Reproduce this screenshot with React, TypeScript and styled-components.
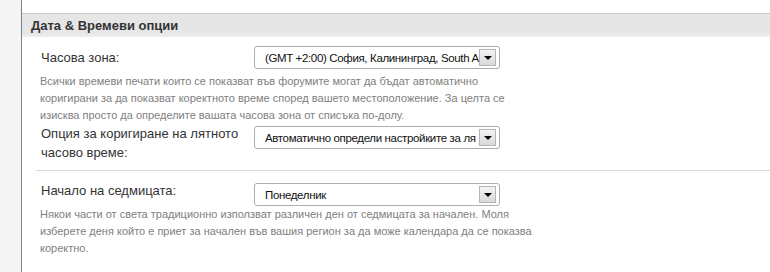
import * as React from "react";
import styled, { createGlobalStyle } from "styled-components";

const GlobalStyle = createGlobalStyle`
  html, body {
    margin: 0;
    padding: 0;
    background: #ffffff;
  }
  body {
    font-family: "Liberation Sans", Arial, sans-serif;
    color: #333333;
  }
`;

type Option = {
  label: string[];
  value: string;
  description?: string[];
  separator?: boolean;
  labelOffset: number;
  selectOffset: number;
  descOffset: number;
  topPad: number;
  bottomPad: number;
};

// стойностите са такива, каквито се виждат в полето (останалото е скрито зад стрелката)
const options: Option[] = [
  {
    label: ["Часова зона:"],
    value: "(GMT +2:00) София, Калининград, South A",
    description: [
      "Всички времеви печати които се показват във форумите могат да бъдат автоматично",
      "коригирани за да показват коректното време според вашето местоположение. За целта се",
      "изисква просто да определите вашата часова зона от списъка по-долу.",
    ],
    labelOffset: 2,
    selectOffset: 0,
    descOffset: 4,
    topPad: 9,
    bottomPad: 0,
  },
  {
    label: ["Опция за коригиране на лятното", "часово време:"],
    value: "Автоматично определи настройките за ля",
    separator: true,
    labelOffset: 0,
    selectOffset: 2,
    descOffset: 0,
    topPad: 0,
    bottomPad: 8,
  },
  {
    label: ["Начало на седмицата:"],
    value: "Понеделник",
    description: [
      "Някои части от света традиционно използват различен ден от седмицата за начален. Моля",
      "изберете деня който е приет за начален във вашия регион за да може календара да се показва",
      "коректно.",
    ],
    labelOffset: -2,
    selectOffset: 0,
    descOffset: 0,
    topPad: 12,
    bottomPad: 0,
  },
];

const App = () => {
  return (
    <>
      <GlobalStyle />
      <Page>
        <Sidebar />
        <Main>
          <Panel>
            <PanelHeader>Дата &amp; Времеви опции</PanelHeader>
            {options.map((o, i) => (
              <React.Fragment key={i}>
                <OptionRow $top={o.topPad} $bottom={o.bottomPad}>
                  <Label $offset={o.labelOffset}>
                    {o.label.map((l) => (
                      <div key={l}>{l}</div>
                    ))}
                  </Label>
                  <SelectBox $offset={o.selectOffset}>
                    <SelectText>{o.value}</SelectText>
                    <ArrowButton>
                      <Triangle />
                    </ArrowButton>
                  </SelectBox>
                </OptionRow>
                {o.description ? (
                  <Description $offset={o.descOffset}>
                    {o.description.map((d) => (
                      <div key={d}>{d}</div>
                    ))}
                  </Description>
                ) : null}
                {o.separator ? <Separator /> : null}
              </React.Fragment>
            ))}
          </Panel>
        </Main>
      </Page>
    </>
  );
};

export default App;

const Page = styled.div`
  display: flex;
  width: 770px;
  height: 272px;
  overflow: hidden;
`;

const Sidebar = styled.div`
  width: 21px;
  flex-shrink: 0;
  background: #f4f4f4;
  border-right: 1px solid #76838f;
`;

const Main = styled.div`
  flex: 1;
  background: #ffffff;
  padding-top: 13px;
`;

const Panel = styled.div`
  border-top: 1px solid #c8c8c8;
`;

const PanelHeader = styled.div`
  height: 23px;
  line-height: 23px;
  padding-left: 9px;
  background: linear-gradient(#e6e6e6 0%, #e6e6e6 80%, #ededed 100%);
  font-size: 13px;
  font-weight: bold;
  color: #333333;
`;

const OptionRow = styled.div<{ $top: number; $bottom: number }>`
  display: grid;
  grid-template-columns: 213px 246px;
  align-items: start;
  padding: ${(p) => p.$top}px 0 ${(p) => p.$bottom}px 19px;
`;

const Label = styled.div<{ $offset: number }>`
  font-size: 13px;
  line-height: 19px;
  color: #333333;
  margin-top: ${(p) => p.$offset}px;
`;

const SelectBox = styled.div<{ $offset: number }>`
  display: flex;
  align-items: center;
  height: 21px;
  margin-top: ${(p) => p.$offset}px;
  padding: 0 3px 0 10px;
  border: 1px solid #a9b0b8;
  border-radius: 3px;
  background: #ffffff;
`;

const SelectText = styled.div`
  flex: 1;
  min-width: 0;
  white-space: nowrap;
  font-size: 11.5px;
  letter-spacing: -0.35px;
  color: #111111;
  padding-top: 1px;
`;

const ArrowButton = styled.div`
  display: flex;
  align-items: center;
  justify-content: center;
  width: 15px;
  height: 15px;
  flex-shrink: 0;
  border: 1px solid #b4b4b4;
  background: linear-gradient(#f4f4f4, #d8d8d8);
`;

const Triangle = styled.div`
  width: 0;
  height: 0;
  border-left: 4px solid transparent;
  border-right: 4px solid transparent;
  border-top: 4px solid #000000;
  margin-top: 1px;
`;

const Description = styled.div<{ $offset: number }>`
  padding-left: 18px;
  margin-top: ${(p) => p.$offset}px;
  font-size: 11px;
  line-height: 17px;
  color: #808080;
`;

const Separator = styled.div`
  margin-left: 14px;
  border-top: 1px solid #d8d8d8;
`;
